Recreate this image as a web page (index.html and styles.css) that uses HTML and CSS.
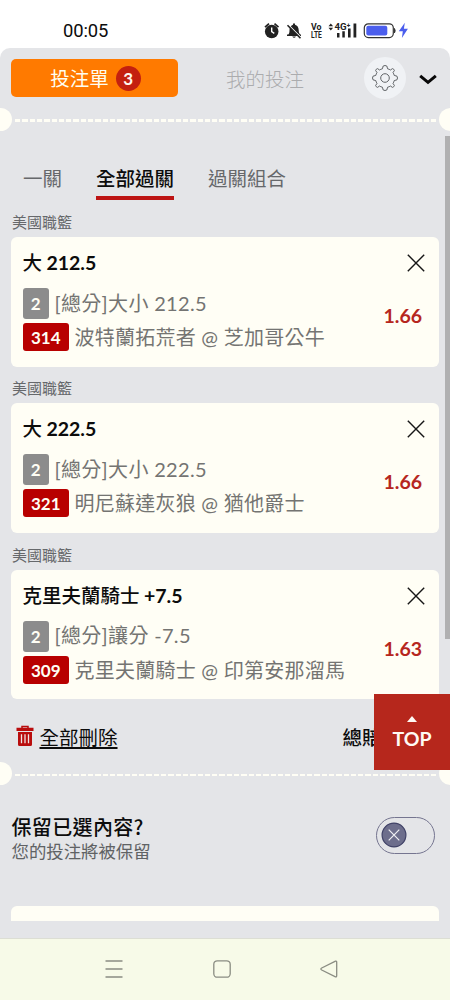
FILE: index.html
```html
<!DOCTYPE html>
<html lang="zh-Hant">
<head>
<meta charset="utf-8">
<title>投注單</title>
<link rel="stylesheet" href="styles.css">
</head>
<body>
<div class="phone">
  <header class="status">
    <span class="clock">00:05</span>
    <svg class="status-icons" width="150" height="22" viewBox="0 0 150 22">
      <g fill="#222">
        <circle cx="11.7" cy="12.500" r="6.800"/>
        <path d="M5 8.200 9 4.700M14.500 4.700l4 3.500" stroke="#222" stroke-width="1.700"/>
        <path d="M11.700 8.500v4.200l2.600 1.600" stroke="#fff" stroke-width="1.400" fill="none"/>
        <path d="M27 15.500h14v1.500H27zM28.300 15.500c1-1 1.200-2.500 1.200-4.500 0-3 1.500-4.600 3.500-5.200v-1.400h2v1.400c2.200.6 3.700 2.600 3.700 5.200 0 2 .3 3.400 1.500 4.500zM32.200 17.500h3.800q-1.900 2.700-3.800 0z"/>
        <path d="m29 6.500 12 12" stroke="#fff" stroke-width="1.300"/>
        <path d="m27.500 6.300 13 13" stroke="#222" stroke-width="1.600"/>
        <path d="m68.500 7.300 2.300-2.800 2.300 2.800zM68.500 8.800l2.300 2.800 2.300-2.800z"/>
        <path d="M77 14h2.500v4.500H77zM82.300 12.300h2.500v6.200h-2.500zM88 9.500h2.600v9H88zM93.500 4.500h2.800v14h-2.800z"/>
      </g>
      <g fill="#222" class="net-text">
        <text x="51" y="10.800" font-size="8.500" textLength="10.500" lengthAdjust="spacingAndGlyphs">Vo</text>
        <text x="51" y="18.900" font-size="8.500" textLength="10.800" lengthAdjust="spacingAndGlyphs">LTE</text>
        <text x="74.500" y="10.800" font-size="9.500" textLength="16" lengthAdjust="spacingAndGlyphs">4G⁺</text>
      </g>
      <rect x="104.300" y="4.800" width="29" height="13.800" rx="4" fill="#fff" stroke="#333" stroke-width="1.200"/>
      <rect x="106.300" y="6.800" width="21" height="9.800" rx="2" fill="#4b5eed"/>
      <path d="M134.500 9.500q1.300 2.200 0 4.400z" fill="#333" stroke="#333"/>
      <path d="M144.800 3.800 138.800 12.300h4l-.9 6.700 6-9.200h-4z" fill="#4b5eed"/>
    </svg>
  </header>

  <main class="sheet">
    <div class="topbar">
      <button class="slip">投注單<span class="count">3</span></button>
      <span class="mine">我的投注</span>
      <span class="gear">
        <svg width="28" height="28" viewBox="-14 -14 28 28" fill="none" stroke="#626568" stroke-width="1" stroke-linejoin="round">
          <circle r="4.300"/>
          <path d="M-1.800-12Q0-13 1.800-12L2.600-9.200Q4.200-8.900 5.400-8L7.500-9.400Q9-9 9.400-7.500L8-5.400Q8.900-4.200 9.200-2.600L12-1.800Q13 0 12 1.800L9.200 2.600Q8.900 4.200 8 5.400L9.400 7.500Q9 9 7.500 9.400L5.400 8Q4.200 8.900 2.600 9.200L1.800 12Q0 13-1.800 12L-2.600 9.200Q-4.200 8.900-5.400 8L-7.500 9.400Q-9 9-9.400 7.500L-8 5.400Q-8.900 4.200-9.200 2.600L-12 1.800Q-13 0-12-1.800L-9.200-2.600Q-8.900-4.200-8-5.400L-9.400-7.500Q-9-9-7.500-9.400L-5.400-8Q-4.200-8.900-2.600-9.200Z"/>
        </svg>
      </span>
      <svg class="chevron" width="18" height="11" viewBox="0 0 18 11" fill="none" stroke="#080808" stroke-width="3"><path d="m1.200 1.800 7.800 6.500 7.800-6.500"/></svg>
    </div>

    <div class="tear"><i class="notch"></i><i class="dash"></i><i class="notch"></i></div>

    <nav class="tabs">
      <span>一關</span><span class="on">全部過關</span><span>過關組合</span>
    </nav>

    <section class="bet">
      <h2>美國職籃</h2>
      <article class="card">
        <div class="info">
          <h3>大 <b>212.5</b></h3>
          <p class="market"><b class="tag gray">2</b><span>[總分]大小 212.5</span></p>
          <p class="teams"><b class="tag red">314</b><span>波特蘭拓荒者 @ 芝加哥公牛</span></p>
        </div>
        <div class="side">
          <svg width="18" height="18" viewBox="0 0 18 18" stroke="#161616" stroke-width="1.400"><path d="m.8.800 16.400 16.400M17.200.8.800 17.200"/></svg>
          <strong>1.66</strong>
        </div>
      </article>
    </section>

    <section class="bet">
      <h2>美國職籃</h2>
      <article class="card">
        <div class="info">
          <h3>大 <b>222.5</b></h3>
          <p class="market"><b class="tag gray">2</b><span>[總分]大小 222.5</span></p>
          <p class="teams"><b class="tag red">321</b><span>明尼蘇達灰狼 @ 猶他爵士</span></p>
        </div>
        <div class="side">
          <svg width="18" height="18" viewBox="0 0 18 18" stroke="#161616" stroke-width="1.400"><path d="m.8.800 16.400 16.400M17.200.8.800 17.200"/></svg>
          <strong>1.66</strong>
        </div>
      </article>
    </section>

    <section class="bet">
      <h2>美國職籃</h2>
      <article class="card">
        <div class="info">
          <h3>克里夫蘭騎士 <b>+7.5</b></h3>
          <p class="market"><b class="tag gray">2</b><span>[總分]讓分 -7.5</span></p>
          <p class="teams"><b class="tag red">309</b><span>克里夫蘭騎士 @ 印第安那溜馬</span></p>
        </div>
        <div class="side">
          <svg width="18" height="18" viewBox="0 0 18 18" stroke="#161616" stroke-width="1.400"><path d="m.8.800 16.400 16.400M17.200.8.800 17.200"/></svg>
          <strong>1.63</strong>
        </div>
      </article>
    </section>

    <div class="summary">
      <svg width="18" height="22" viewBox="0 0 18 22">
        <path d="M6 3V1.500h6V3" fill="none" stroke="#b90d0d" stroke-width="1.500"/>
        <path d="M.5 2.800h17V6H.500zM2 7h14v12.500q0 1.500-1.500 1.500h-11Q2 21 2 19.500z" fill="#b90d0d"/>
        <path d="M5.500 9.300v9M9 9.300v9M12.500 9.300v9" stroke="#efe4e4" stroke-width="1.300"/>
      </svg>
      <a class="clear">全部刪除</a>
      <span class="odds">總賠</span>
    </div>

    <div class="tear"><i class="notch"></i><i class="dash"></i><i class="notch"></i></div>

    <div class="keep">
      <div class="keep-text"><h4>保留已選內容?</h4><p>您的投注將被保留</p></div>
      <span class="toggle">
        <svg width="26" height="26" viewBox="0 0 26 26"><circle cx="13" cy="13" r="11.900" fill="#6d6e8c" stroke="#404267" stroke-width="1.200"/><path d="m7.700 7.700 10.600 10.600M18.300 7.700 7.700 18.300" stroke="#f0f0f3" stroke-width="1.200"/></svg>
      </span>
    </div>

    <div class="next-card"></div>
    <i class="scrollbar"></i>
    <a class="to-top"><i></i>TOP</a>
  </main>

  <footer class="sysnav">
    <svg width="18" height="18" viewBox="0 0 18 18" fill="none" stroke="#8a8c82" stroke-width="1.300"><path d="M.5 1h17M.5 9h17M.5 17h17"/></svg>
    <svg width="18" height="18" viewBox="0 0 18 18" fill="none" stroke="#8a8c82" stroke-width="1.300"><rect x=".8" y=".8" width="16.400" height="16.400" rx="3.500"/></svg>
    <svg width="18" height="18" viewBox="0 0 18 18" fill="none" stroke="#8a8c82" stroke-width="1.300"><path d="M15.500 1.200 1.700 8q-1.700 1 0 2l13.800 6.800q1.200.4 1.200-1V2.200q0-1.400-1.200-1z"/></svg>
  </footer>
</div>
</body>
</html>
```
FILE: styles.css
```css
* { box-sizing: border-box; margin: 0; padding: 0; }
body {
  width: 450px; height: 1000px; overflow: hidden; background: #fff;
  font-family: Lato, "Noto Sans CJK TC", sans-serif; color: #0c0c0c;
}
.phone { display: flex; flex-direction: column; width: 450px; height: 1000px; }

.status { height: 48px; display: flex; justify-content: space-between; padding: 19px 40px 0 63px; }
.clock { font: 400 18.4px/24px Roboto, Inter, sans-serif; letter-spacing: -.1px; }
.net-text { font-family: Roboto, sans-serif; font-weight: 700; }

.sheet {
  position: relative; height: 890px; overflow: hidden;
  background: #e4e5e8; border-radius: 10px 10px 0 0;
}
.topbar { height: 60px; display: flex; align-items: center; padding-left: 11px; }
.slip {
  width: 167px; height: 38px; border: 0; border-radius: 5px; background: #ff7a00; color: #fffef0;
  display: flex; align-items: center; justify-content: center; gap: 7px; padding: 2px 0 0 2px;
  font: 19.5px/38px Lato, "Noto Sans CJK TC", sans-serif;
}
.count {
  width: 25px; height: 25px; border-radius: 50%; background: #c4200f; color: #fff8ee;
  font-size: 17px; line-height: 25px; font-weight: 700; margin-bottom: 2px;
}
.mine { margin-left: 48px; width: 90px; font-size: 19.5px; color: #abacae; font-weight: 300; }
.gear { width: 42px; height: 42px; margin-left: 48px; border-radius: 50%; background: #f0f2f5; display: grid; place-items: center; }
.chevron { margin: 3px 0 0 13px; }

.tear { height: 22px; display: flex; align-items: center; justify-content: space-between; }
.notch { flex: none; width: 23px; height: 23px; border-radius: 50%; background: #fffef5; margin: 0 -11.500px; }
.dash { flex: 1; height: 2.500px; margin: 3px 12px 0 15px; background: repeating-linear-gradient(90deg, #fffef5 0 5.300px, transparent 5.300px 7.300px); }

.tabs { height: 70px; padding: 33px 0 0 23px; display: flex; gap: 34px; font-size: 19.5px; line-height: 32px; color: #66686b; align-items: flex-start; }
.tabs .on { color: #0c0c0c; font-weight: 500; border-bottom: 4px solid #bd1414; height: 37px; }

.bet { height: 166.400px; padding: 0 11px; }
.bet h2 { height: 37px; padding: 11px 0 0 1px; font-size: 15px; line-height: 22px; font-weight: 400; color: #66686b; }
.card { height: 129.500px; background: #fffef5; border-radius: 6px; display: flex; justify-content: space-between; padding: 11px 14px 0 11.500px; }
.info h3 { font-size: 19.500px; line-height: 30px; height: 40px; font-weight: 500; word-spacing: -.5px; }
.info h3 b { font-weight: 700; }
.info p { display: flex; align-items: center; gap: 5.500px; font-size: 20px; white-space: nowrap; color: #747472; letter-spacing: .25px; }
.info p span { margin-top: -1px; }
.info .market span { margin-top: -3px; letter-spacing: .33px; }
.market { height: 31px; margin-bottom: 4px; }
.teams { height: 28px; }
.tag { border-radius: 3px; color: #fffef5; font-size: 17px; font-weight: 700; text-align: center; letter-spacing: 0; }
.gray { width: 26.500px; height: 31px; line-height: 31px; background: #8c8c8c; }
.red { width: 46.500px; height: 28px; line-height: 29px; background: #b80000; }
.side { display: flex; flex-direction: column; align-items: flex-end; padding-top: 6px; }
.side strong { margin: 32px 3px 0 0; font-size: 19.500px; line-height: 24px; color: #b6261e; }

.summary { height: 63.500px; display: flex; align-items: flex-start; padding: 25px 0 0 15.500px; font-size: 19.500px; line-height: 28px; }
.summary svg { margin: 1px 6px 0 0; }
.clear { text-decoration: underline; text-decoration-thickness: 1.500px; text-underline-offset: 2px; }
.odds { margin-left: 225px; font-weight: 500; }

.keep { display: flex; justify-content: space-between; padding: 28px 15.500px 0 11.500px; height: 121.500px; }
.keep h4 { font: 500 20px/28px "Noto Sans CJK TC", sans-serif; letter-spacing: .35px; }
.keep p { font-size: 17.400px; line-height: 22px; color: #606264; }
.toggle { width: 59px; height: 37px; margin-top: 4px; border: 1.500px solid #757590; border-radius: 19px; padding: 4.500px; }
.toggle svg { display: block; }
.next-card { height: 15px; margin: 0 11px; border-radius: 6px 6px 0 0; background: #fffef5; }

.scrollbar { position: absolute; right: 0; top: 88px; width: 5px; height: 503px; background: #b0b0b1; }
.to-top {
  position: absolute; right: 0; top: 646px; width: 76px; height: 75.500px; background: #b6271c; color: #fffaf4;
  display: flex; flex-direction: column; align-items: center; padding-top: 22px;
  font-size: 19.500px; line-height: 33px; font-weight: 700;
}
.to-top i { border: 5.500px solid transparent; border-top: 0; border-bottom: 6px solid #fffaf4; }

.sysnav { height: 62px; background: #f7fae8; border-top: 1px solid #dcded4; display: flex; gap: 89.500px; padding: 21px 0 0 105px; }
```
